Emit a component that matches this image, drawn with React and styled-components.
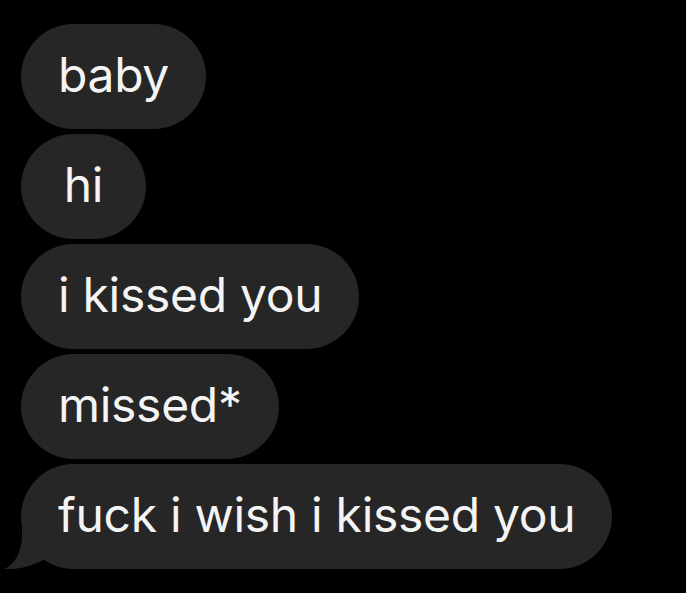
import React from "react";
import styled, { createGlobalStyle } from "styled-components";

const Global = createGlobalStyle`
  html, body { margin: 0; padding: 0; background: #000; }
  body { width: 686px; height: 593px; overflow: hidden; }
`;

const Thread = styled.div`
  display: flex;
  flex-direction: column;
  align-items: flex-start;
  gap: 5px;
  padding: 24px 0 0 21px;
  background: #000;
  min-height: 593px;
  box-sizing: border-box;
`;

const Bubble = styled.div`
  position: relative;
  display: flex;
  align-items: center;
  justify-content: center;
  box-sizing: border-box;
  height: 105px;
  min-width: 125px;
  padding: 0 37px 4px 37px;
  border-radius: 53px;
  background: #262626;
  color: #f4f4f4;
  font-family: Inter, "Noto Sans", sans-serif;
  font-size: 48px;
  letter-spacing: -0.3px;
  white-space: nowrap;
`;

const Label = styled.span`
  position: relative;
  z-index: 1;
`;

const Tail = styled.svg`
  position: absolute;
  z-index: 0;
  left: -21px;
  bottom: 0;
  width: 70px;
  height: 60px;
`;

const messages = ["baby", "hi", "i kissed you", "missed*", "fuck i wish i kissed you"];

export default function App() {
  return (
    <>
      <Global />
      <Thread>
        {messages.map((m, i) => (
          <Bubble key={i}>
            {i === messages.length - 1 && (
              <Tail viewBox="0 0 70 60">
                <path
                  d="M22 0 L22 26 C22 44 14 56 4 60 C18 61 32 57 43 51 L70 40 L70 0 Z"
                  fill="#262626"
                />
              </Tail>
            )}
            <Label>{m}</Label>
          </Bubble>
        ))}
      </Thread>
    </>
  );
}
